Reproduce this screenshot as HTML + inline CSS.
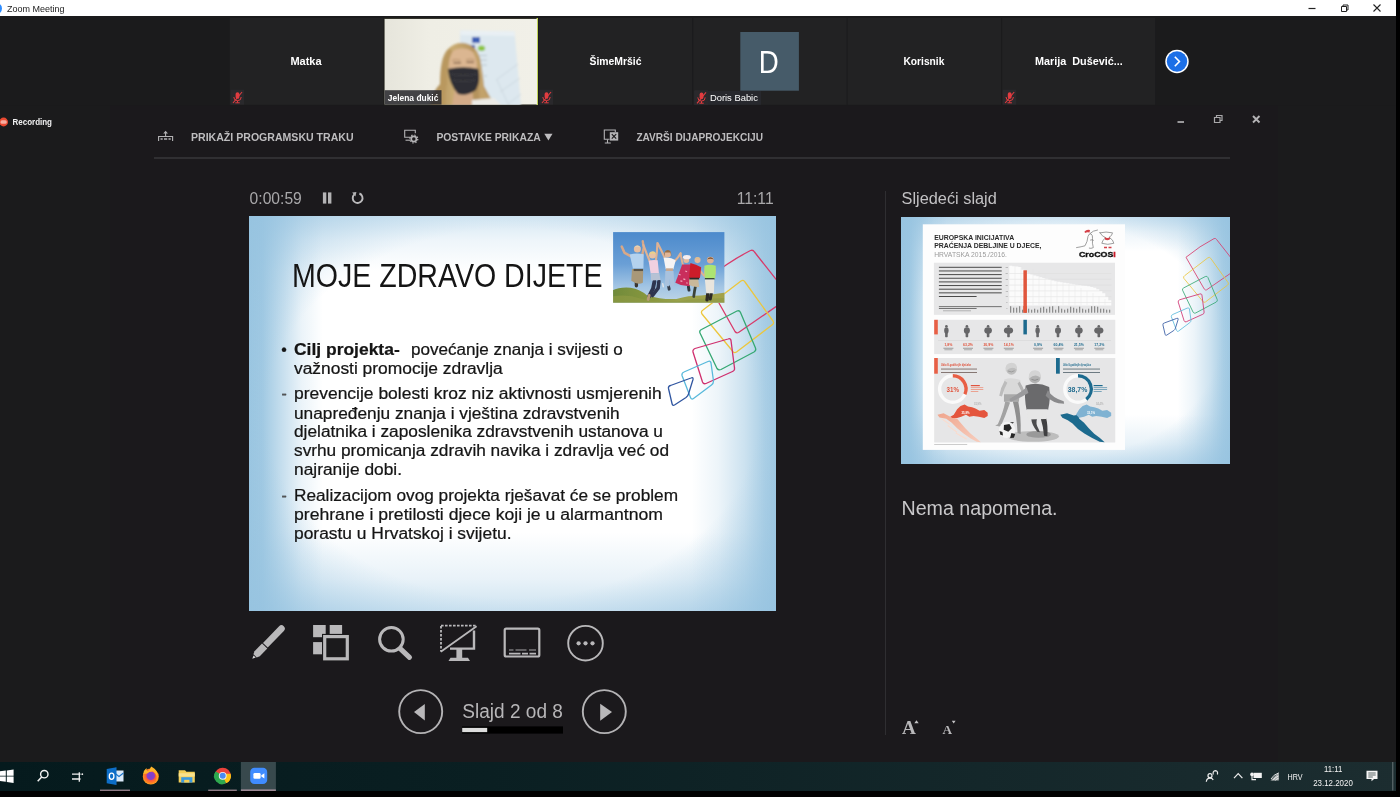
<!DOCTYPE html>
<html lang="hr">
<head>
<meta charset="utf-8">
<title>Zoom Meeting</title>
<style>
*{box-sizing:border-box;margin:0;padding:0}
html,body{width:1400px;height:797px;overflow:hidden;background:#1b1a1c;font-family:"Liberation Sans","DejaVu Sans",sans-serif;color:#fff}
.abs{position:absolute}
#root{position:relative;width:1400px;height:797px;overflow:hidden;background:#1b1a1c;filter:blur(0.35px)}
/* title bar */
#titlebar{left:0;top:0;width:1400px;height:16.500px;background:#fff;color:#222}
#titlebar .ttl{left:7px;top:2px;font-size:10px;line-height:13px;color:#1a1a1a;letter-spacing:-0.1px}
/* gallery */
.tile{top:18px;height:87px;background:#222123;overflow:hidden}
.tile .nm{left:0;right:0;top:35px;text-align:center;font-size:11px;font-weight:bold;line-height:14px;color:#fff}
.mic{left:2px;top:72px;width:13px;height:14px}
/* ppt */
.tb{top:129px;font-size:11px;font-weight:bold;line-height:14px;color:#c9c8ca;letter-spacing:-0.1px;white-space:nowrap}
#slide{left:249px;top:216px;width:527px;height:395px;overflow:hidden;background:radial-gradient(ellipse farthest-corner at 50% 50%,rgba(150,195,224,0) 66%,rgba(150,195,224,.75) 100%),linear-gradient(90deg,rgba(155,198,225,1) 0%,rgba(155,198,225,.95) 2.500%,rgba(155,198,225,.55) 6.500%,rgba(155,198,225,.2) 10%,rgba(155,198,225,0) 14%,rgba(155,198,225,0) 84%,rgba(155,198,225,.18) 89%,rgba(155,198,225,.5) 94%,rgba(155,198,225,.85) 98%,rgba(155,198,225,.95) 100%),linear-gradient(180deg,rgba(185,215,235,.6) 0%,rgba(185,215,235,.25) 6%,rgba(185,215,235,0) 14%,rgba(180,212,233,0) 80%,rgba(180,212,233,.3) 92%,rgba(180,212,233,.65) 100%),#fff}
#slide .t{color:#141414;white-space:nowrap}
#next{left:901px;top:217px;width:329px;height:247px;overflow:hidden;background:radial-gradient(ellipse farthest-corner at 50% 50%,rgba(150,195,224,0) 66%,rgba(150,195,224,.75) 100%),linear-gradient(90deg,rgba(155,198,225,1) 0%,rgba(155,198,225,.95) 2.500%,rgba(155,198,225,.55) 6.500%,rgba(155,198,225,.2) 10%,rgba(155,198,225,0) 14%,rgba(155,198,225,0) 84%,rgba(155,198,225,.18) 89%,rgba(155,198,225,.5) 94%,rgba(155,198,225,.85) 98%,rgba(155,198,225,.95) 100%),linear-gradient(180deg,rgba(185,215,235,.6) 0%,rgba(185,215,235,.25) 6%,rgba(185,215,235,0) 14%,rgba(180,212,233,0) 80%,rgba(180,212,233,.3) 92%,rgba(180,212,233,.65) 100%),#fff}
/* taskbar */
#taskbar{left:0;top:761.500px;width:1400px;height:29.500px;background:linear-gradient(90deg,#051a1d 0%,#0a1f22 35%,#14272a 70%,#1c2d30 100%)}
#below{left:0;top:790.800px;width:1400px;height:7px;background:#010101}
</style>
</head>
<body>
<div id="root">

<!-- TITLE BAR -->
<div id="titlebar" class="abs">
  <div class="abs" style="left:-9px;top:3px;width:11px;height:11px;border-radius:50%;background:#2d8cff"></div>
  <svg class="abs" style="left:0;top:0" width="100" height="17"><text x="7" y="11.700" font-size="9.800" fill="#222" textLength="57.500" lengthAdjust="spacingAndGlyphs" font-family="'Liberation Sans',sans-serif">Zoom Meeting</text></svg>
  <svg class="abs" style="left:1300px;top:0" width="100" height="17" viewBox="0 0 100 17">
    <path d="M8.5 8.5h7" stroke="#222" stroke-width="1.2" fill="none"/>
    <path d="M41.5 6.5h5v5h-5z M43 6.5v-1.5h5v5h-1.5" stroke="#222" stroke-width="1" fill="none"/>
    <path d="M73.5 4.5l7 7M80.500 4.5l-7 7" stroke="#222" stroke-width="1.1" fill="none"/>
  </svg>
</div>

<div class="abs" style="left:0;top:16px;width:110px;height:746px;background:#1b1b1c"></div>
<div class="abs" style="left:1278px;top:16px;width:122px;height:746px;background:#1b1b1c"></div>
<div class="abs" style="left:110px;top:105px;width:1168px;height:657px;background:#1b191c"></div>
<!-- GALLERY -->
<svg class="abs" id="gallery" style="left:0;top:0" width="1400" height="797" viewBox="0 0 1400 797" font-family="'Liberation Sans','DejaVu Sans',sans-serif">
  <defs>
    <filter id="vb" x="-5%" y="-5%" width="110%" height="110%"><feGaussianBlur stdDeviation="0.900"/></filter>
    <clipPath id="vc"><rect x="384.200" y="18.700" width="152.900" height="86.100"/></clipPath>
    <linearGradient id="wall" x1="0" y1="0" x2="1" y2="0"><stop offset="0" stop-color="#e6e5db"/><stop offset=".3" stop-color="#efeee5"/><stop offset="1" stop-color="#f1f0e8"/></linearGradient>
    <linearGradient id="hair" x1="0" y1="0" x2="1" y2="0"><stop offset="0" stop-color="#a88a58"/><stop offset=".35" stop-color="#c9ab72"/><stop offset=".7" stop-color="#b4925c"/><stop offset="1" stop-color="#c7a772"/></linearGradient>
  </defs>
  <rect x="0" y="16" width="1400" height="89.300" fill="#1b1b1c"/>
  <g fill="#222223">
    <rect x="229.700" y="18" width="153.300" height="86.800"/>
    <rect x="538.700" y="18" width="153.500" height="86.800"/>
    <rect x="693.300" y="18" width="153.300" height="86.800"/>
    <rect x="847.600" y="18" width="153.500" height="86.800"/>
    <rect x="1002.200" y="18" width="153" height="86.800"/>
  </g>
  <!-- video tile -->
  <rect x="383.700" y="17.800" width="154.200" height="87.400" fill="#2a2a22"/><rect x="536.500" y="18" width="1.500" height="87" fill="#cfe65a" opacity=".9"/>
  <g clip-path="url(#vc)">
    <rect x="384.500" y="18.800" width="152.600" height="85.800" fill="url(#wall)"/>
    <g filter="url(#vb)">
      <path d="M460.200 30.500 L514.500 31.500 L521 106 L459 106Z" fill="#dde8ef"/>
      <path d="M460.200 30.500 L514.500 31.500 L515 36 L460.500 35Z" fill="#e9f0f4"/>
      <path d="M472 37 h8 v6 h-8z" fill="#3c5fb5"/><path d="M471 45 h4 v4 h-4z" fill="#3c5fb5"/>
      <ellipse cx="481.500" cy="48.200" rx="3.600" ry="2.800" fill="#8cc540"/>
      <path d="M479 55.500h8M480 60h7M481 65h6M484 76h3" stroke="#b8c4cc" stroke-width="1" fill="none"/>
      <path d="M496 80l22-16M500 92l20-14M508 104l13-10M497 80l12 26" stroke="#c9d3da" stroke-width=".8" fill="none"/>
      <!-- hair back -->
      <path d="M430 106 Q432 92 440 84 Q440 58 447 50 Q455 41.500 465 43 Q476 45 480 58 Q483 74 484 86 Q489 96 496 106Z" fill="url(#hair)"/>
      <!-- face -->
      <path d="M449.500 58 Q451 48.500 462 48.300 Q474 49 476.500 58 L477.500 71 L448.500 71Z" fill="#dbb691"/>
      <path d="M453.500 62.800h7.500M466.500 62.300h7.500" stroke="#86664c" stroke-width="1.400" fill="none"/>
      <path d="M452 60.300q4-1.600 8.500 0M466 59.800q4-1.600 8.500 0" stroke="#a98560" stroke-width=".8" fill="none"/>
      <!-- neck -->
      <path d="M455 88 L472 88 L474 106 L452 106Z" fill="#d3ab88"/>
      <!-- mask -->
      <path d="M447.800 69 Q463 65.500 479.300 69 Q481 80 476 90 Q467 96.500 458 94 Q449.500 85 447.800 69Z" fill="#2f2f34"/>
      <path d="M451 74q11 3 26 0M452.500 80q10 3 23 0" stroke="#3f3f45" stroke-width="1" fill="none"/>
      <!-- hair front strands -->
      <path d="M449 49 Q441 60 441 84 Q436 92 433 106 L445.500 106 Q444.500 92 447 84 Q445.500 66 452.500 51Z" fill="#b9985f"/>
      <path d="M476 50 Q482 62 482.500 80 Q484 94 491 106 L481 106 Q478.500 96 479.500 84 Q480 66 473 52Z" fill="#c2a26a"/>
      <path d="M472 100 L494 98 L502 106 L472 106Z" fill="#ecebe6"/>
    </g>
    <rect x="384.500" y="90.200" width="57" height="14.600" fill="#2b2b30" opacity=".88"/>
    <text x="387.800" y="100.800" font-size="9.600" font-weight="bold" fill="#fff" textLength="50.600" lengthAdjust="spacingAndGlyphs">Jelena đukić</text>
  </g>
  <!-- avatar tile -->
  <rect x="740.300" y="32" width="58.600" height="58.700" fill="#465b69"/>
  <text x="758.800" y="72.900" font-size="30.500" fill="#fff" textLength="20" lengthAdjust="spacingAndGlyphs">D</text>
  <rect x="694" y="91" width="67" height="13.800" fill="#27282d"/>
  <text x="709.900" y="100.800" font-size="9.600" fill="#fff" textLength="48" lengthAdjust="spacingAndGlyphs">Doris Babic</text>
  <!-- names -->
  <g font-size="10.800" font-weight="bold" fill="#fff">
    <text x="290.400" y="64.700" textLength="31.200" lengthAdjust="spacingAndGlyphs">Matka</text>
    <text x="589.500" y="64.700" textLength="52" lengthAdjust="spacingAndGlyphs">ŠimeMršić</text>
    <text x="903.400" y="64.700" textLength="41" lengthAdjust="spacingAndGlyphs">Korisnik</text>
    <text x="1035" y="64.700" textLength="87.800" lengthAdjust="spacingAndGlyphs" xml:space="preserve">Marija  Dušević...</text>
  </g>
  <g transform="translate(232 91.2)"><rect x="-1.500" y="-1.500" width="13.500" height="15" fill="#2a292c"/><rect x="3.600" y="1" width="3.800" height="6.600" rx="1.900" fill="#e23c40"/><path d="M1.800 5.800a3.700 3.700 0 0 0 7.400 0M5.500 9.500v2M3.300 11.600h4.400" fill="none" stroke="#e23c40" stroke-width="1"/><path d="M1 11.800L10 .8" stroke="#e23c40" stroke-width="1.100"/></g><g transform="translate(541 91.2)"><rect x="-1.500" y="-1.500" width="13.500" height="15" fill="#2a292c"/><rect x="3.600" y="1" width="3.800" height="6.600" rx="1.900" fill="#e23c40"/><path d="M1.800 5.800a3.700 3.700 0 0 0 7.400 0M5.500 9.500v2M3.300 11.600h4.400" fill="none" stroke="#e23c40" stroke-width="1"/><path d="M1 11.800L10 .8" stroke="#e23c40" stroke-width="1.100"/></g><g transform="translate(696 91.6)"><rect x="-1.500" y="-1.500" width="13.500" height="15" fill="#2a292c"/><rect x="3.600" y="1" width="3.800" height="6.600" rx="1.900" fill="#e23c40"/><path d="M1.800 5.800a3.700 3.700 0 0 0 7.400 0M5.500 9.500v2M3.300 11.600h4.400" fill="none" stroke="#e23c40" stroke-width="1"/><path d="M1 11.800L10 .8" stroke="#e23c40" stroke-width="1.100"/></g><g transform="translate(1004.2 91.2)"><rect x="-1.500" y="-1.500" width="13.500" height="15" fill="#2a292c"/><rect x="3.600" y="1" width="3.800" height="6.600" rx="1.900" fill="#e23c40"/><path d="M1.800 5.800a3.700 3.700 0 0 0 7.400 0M5.500 9.500v2M3.300 11.600h4.400" fill="none" stroke="#e23c40" stroke-width="1"/><path d="M1 11.800L10 .8" stroke="#e23c40" stroke-width="1.100"/></g>
  <!-- next arrow -->
  <circle cx="1177" cy="61.500" r="11.700" fill="#fff"/>
  <circle cx="1177" cy="61.500" r="10.200" fill="#1c6fe6"/>
  <path d="M1174.800 56.800l4.600 4.700l-4.600 4.700" fill="none" stroke="#fff" stroke-width="1.600"/>
  <!-- recording -->
  <circle cx="3.600" cy="122" r="4.400" fill="#ea4a32"/>
  <rect x="0.500" y="120.300" width="6.200" height="3.400" rx="1.500" fill="#f9c0b4" opacity=".85"/>
  <text x="12.500" y="125.200" font-size="9.600" font-weight="bold" fill="#f2f2f2" textLength="39.500" lengthAdjust="spacingAndGlyphs">Recording</text>
  <!-- ppt window controls -->
  <path d="M1177.500 122h6.500" stroke="#a9a8aa" stroke-width="1.800"/>
  <path d="M1214.500 117.500h5.500v5h-5.500z M1216.500 117.500v-2h5.500v5h-2" fill="none" stroke="#a9a8aa" stroke-width="1.200"/>
  <path d="M1253 116l6.500 6.500M1259.500 116l-6.500 6.500" stroke="#b4b3b5" stroke-width="1.900"/>
</svg>

<!-- PRESENTER VIEW -->
<div id="ppt">
  <div class="abs" style="left:154px;top:157px;width:1076px;height:2px;background:#302f32"></div>
  <div class="abs" style="left:885px;top:191px;width:1.200px;height:544px;background:#2f2e31"></div>

  <svg class="abs" id="ui" style="left:0;top:0" width="1400" height="797" viewBox="0 0 1400 797" font-family="'Liberation Sans','DejaVu Sans',sans-serif">
    <!-- top toolbar -->
    <g font-size="10.600" font-weight="bold" fill="#bebdbf">
      <text x="191" y="140.700" textLength="162.600" lengthAdjust="spacingAndGlyphs">PRIKAŽI PROGRAMSKU TRAKU</text>
      <text x="436.400" y="140.700" textLength="104.300" lengthAdjust="spacingAndGlyphs">POSTAVKE PRIKAZA</text>
      <text x="636.400" y="140.700" textLength="126.600" lengthAdjust="spacingAndGlyphs">ZAVRŠI DIJAPROJEKCIJU</text>
    </g>
    <path d="M544.300 133.800h8.200l-4.100 6.800z" fill="#bebdbf"/>
    <!-- icon: show taskbar -->
    <g fill="none" stroke="#b4b3b5" stroke-width="1.100">
      <path d="M158.600 141v-4.500h14v4.500"/>
      <path d="M165.600 136.500v-4.500"/>
    </g>
    <path d="M163.200 133.600l2.400-2.800l2.400 2.800z M160.500 138.200h2.200v1.600h-2.200z M164 138.200h3.200v1.600h-3.200z M168.500 138.200h2.200v1.600h-2.200z" fill="#b4b3b5"/>
    <!-- icon: display settings -->
    <g fill="none" stroke="#b4b3b5" stroke-width="1.100">
      <path d="M411 137.200h-6.300v-7h10.600v3"/>
      <path d="M405.500 140.200h4.500"/>
    </g>
    <circle cx="413.800" cy="139" r="2.600" fill="none" stroke="#b4b3b5" stroke-width="1.700"/>
    <circle cx="413.800" cy="139" r="4" fill="none" stroke="#b4b3b5" stroke-width="1.200" stroke-dasharray="1.400 1.740"/>
    <!-- icon: end show -->
    <g fill="none" stroke="#b4b3b5" stroke-width="1.100">
      <path d="M609.500 139.200h-5.200v-9.200h11v2"/>
      <path d="M607.500 139.500v3.200M604.800 143h6"/>
    </g>
    <rect x="609.800" y="132.200" width="8.400" height="8.400" fill="#b4b3b5"/>
    <path d="M611.800 134.200l4.400 4.400M616.200 134.200l-4.400 4.400" stroke="#1b1a1c" stroke-width="1.200"/>
    <!-- timer row -->
    <g font-size="15.600" fill="#a9a8aa">
      <text x="249.600" y="203.700" textLength="52.200" lengthAdjust="spacingAndGlyphs">0:00:59</text>
      <text x="736.700" y="203.700" textLength="37" lengthAdjust="spacingAndGlyphs">11:11</text>
      <text x="901.600" y="203.800" textLength="95.200" lengthAdjust="spacingAndGlyphs" fill="#c2c1c3">Sljedeći slajd</text>
    </g>
    <rect x="322.900" y="192.400" width="3.400" height="11.200" fill="#b4b3b5"/>
    <rect x="328" y="192.400" width="3.400" height="11.200" fill="#b4b3b5"/>
    <path d="M354.400 194.400A4.900 4.900 0 1 0 359.400 193.500" fill="none" stroke="#bcbbbd" stroke-width="1.900"/>
    <path d="M352.200 192.600l4.200-.6l-1 4.400z" fill="#b4b3b5"/>
    <!-- notes -->
    <text x="901.500" y="514.600" font-size="20" fill="#c9c8ca" textLength="156" lengthAdjust="spacingAndGlyphs">Nema napomena.</text>
    <g font-family="'Liberation Serif','DejaVu Serif',serif" font-weight="bold" fill="#b9b8ba">
      <text x="902" y="733.900" font-size="19.200">A</text>
      <text x="942.600" y="733.900" font-size="13.200">A</text>
    </g>
    <path d="M914.300 723.300l2.200-3.100l2.200 3.100z M951.800 720.700l3.800 0l-1.900 2.700z" fill="#c4c3c5"/>
    <!-- tools -->
    <g id="tools">
      <!-- pen -->
      <g transform="translate(252.300 658.800) rotate(-46)" fill="#b9b8ba">
        <path d="M0 0 L3.300 -1.500 V1.500 Z" fill="#d8d7d9"/>
        <path d="M4 -2.300 L7 -3.650 H17.800 V3.650 H7 L4 2.300 Z"/>
        <path d="M18.800 -3.300 H42 A3.300 3.300 0 0 1 42 3.300 H18.800 Z"/>
      </g>
      <!-- grid -->
      <rect x="313.100" y="625" width="12.600" height="12.200" fill="#b9b8ba"/>
      <rect x="329.700" y="625" width="12.400" height="12.200" fill="#b9b8ba"/>
      <rect x="313.100" y="642.100" width="12" height="12.200" fill="#b9b8ba"/>
      <rect x="322" y="633.900" width="28" height="27.600" fill="#1b1a1c"/>
      <rect x="324.700" y="636.600" width="22.600" height="22.200" fill="none" stroke="#b9b8ba" stroke-width="3.200"/>
      <!-- magnifier -->
      <circle cx="391.400" cy="639.300" r="11.800" fill="none" stroke="#b9b8ba" stroke-width="3"/>
      <path d="M400.200 648.600L409.500 657.400" stroke="#b9b8ba" stroke-width="5" stroke-linecap="round"/>
      <!-- black screen monitor -->
      <path d="M441 625.700H476" stroke="#b9b8ba" stroke-width="1.800" stroke-dasharray="2.600 1.400" fill="none"/>
      <path d="M441 626V651.500" stroke="#b9b8ba" stroke-width="1.800" stroke-dasharray="2.600 1.400" fill="none"/>
      <path d="M440.800 651.800L476.600 626.200" stroke="#b9b8ba" stroke-width="1.800" fill="none"/>
      <path d="M474 630.500V648.600H450" stroke="#b9b8ba" stroke-width="2.400" fill="none"/>
      <rect x="456.400" y="649" width="5.800" height="9.200" fill="#b9b8ba"/>
      <path d="M450.500 657.800h17.500l2 3.200h-21.500z" fill="#b9b8ba"/>
      <!-- subtitles -->
      <rect x="504.700" y="628.700" width="34.600" height="27.800" rx="1.500" fill="none" stroke="#b9b8ba" stroke-width="2.200"/>
      <path d="M509 650h4.500M515.500 650h11M529 650h7" stroke="#b9b8ba" stroke-width=".9"/>
      <path d="M509 653.700h11.500M522 653.700h6M529.500 653.700h6.500" stroke="#b9b8ba" stroke-width="1.700"/>
      <!-- more -->
      <circle cx="585.500" cy="643.200" r="17.300" fill="none" stroke="#b9b8ba" stroke-width="1.900"/>
      <circle cx="578.600" cy="643.300" r="2.100" fill="#b9b8ba"/><circle cx="585.500" cy="643.300" r="2.100" fill="#b9b8ba"/><circle cx="592.500" cy="643.300" r="2.100" fill="#b9b8ba"/>
    </g>
    <!-- nav -->
    <circle cx="420.700" cy="711.600" r="21.500" fill="none" stroke="#b4b3b5" stroke-width="1.900"/>
    <path d="M414 712.100L424.800 704.100V720.600z" fill="#b9b8ba"/>
    <circle cx="604.300" cy="711.600" r="21.500" fill="none" stroke="#b4b3b5" stroke-width="1.900"/>
    <path d="M612 712.100L600.200 703.800V720.700z" fill="#b9b8ba"/>
    <text x="462.300" y="717.500" font-size="20" fill="#b7b6b8" textLength="100.600" lengthAdjust="spacingAndGlyphs">Slajd 2 od 8</text>
    <rect x="462" y="726.400" width="101" height="7.200" fill="#000"/>
    <rect x="462.200" y="727.900" width="25" height="4.200" fill="#dcdcdc"/>
  </svg>

  <div class="abs" id="slide">
    <svg class="abs" style="left:0;top:0" width="527" height="395" viewBox="249 216 527 395" font-family="'Liberation Sans','DejaVu Sans',sans-serif" fill="#151515">
      <g id="deco" fill="none" stroke-width="1.3" stroke-linejoin="round" stroke-linecap="round">
        <path d="M706 280 Q728 262 750.500 250.500 Q753 249.500 754.500 252 L790 297 L738.500 332.500 Q736.500 333.500 735 331.500 Z" stroke="#d83a6a"/>
        <path d="M741 281 Q743.500 279.500 745 282 L773 321 Q774.500 323.500 772 325 L736.500 352 Q734 353.500 732.500 351 L702 314 Q700.500 311.500 703 310 Z" stroke="#ecc63c"/>
        <path d="M737 311 Q739.500 310 740.500 312.500 L755.500 348 Q756.500 350.500 754 352 L721 369.500 Q718.500 370.500 717 368.500 L700 333 Q699 330.500 701.500 329.500 Z" stroke="#35a873"/>
        <path d="M728 339 Q730.500 338 731 340.500 L734.500 368 Q735 370.500 732.500 371.500 L706 383.500 Q703.500 384.500 702.500 382 L693 352 Q692.500 349.500 695 348.500 Z" stroke="#cf2f6e"/>
        <path d="M708 361.500 Q710.500 360.500 711 363 L713.500 381 Q713.500 383.500 711.500 385 L693.500 398.500 Q691.500 400 690.500 397.500 L682 375.500 Q681.500 373 684 372 Z" stroke="#58b9db"/>
        <path d="M691 378 Q693.500 377 693 379.500 L688.500 394 Q688 396 686 397.500 L674.500 405 Q672.500 406 672 403.500 L668.500 388.500 Q668 386 670.500 385.500 Z" stroke="#2f55a0"/>
      </g>
      <text x="292" y="286.700" font-size="32.500" textLength="310.500" lengthAdjust="spacingAndGlyphs">MOJE ZDRAVO DIJETE</text>
      <g font-size="15.800" stroke="#151515" stroke-width=".22">
        <text x="281.300" y="354.600">•</text>
        <text x="294" y="354.600" font-weight="bold" textLength="105.700" lengthAdjust="spacingAndGlyphs">Cilj projekta-</text>
        <text x="411" y="354.600" textLength="211.700" lengthAdjust="spacingAndGlyphs">povećanje znanja i svijesti o</text>
        <text x="294" y="373.500" textLength="208.700" lengthAdjust="spacingAndGlyphs">važnosti promocije zdravlja</text>
        <text x="281.500" y="399" fill="#555">-</text>
        <text x="294" y="399" textLength="367.700" lengthAdjust="spacingAndGlyphs">prevencije bolesti kroz niz aktivnosti usmjerenih</text>
        <text x="294" y="418.500" textLength="325.700" lengthAdjust="spacingAndGlyphs">unapređenju znanja i vještina zdravstvenih</text>
        <text x="294" y="437.300" textLength="369" lengthAdjust="spacingAndGlyphs">djelatnika i zaposlenika zdravstvenih ustanova u</text>
        <text x="294" y="456.200" textLength="375" lengthAdjust="spacingAndGlyphs">svrhu promicanja zdravih navika i zdravlja već od</text>
        <text x="294" y="475.200" textLength="108" lengthAdjust="spacingAndGlyphs">najranije dobi.</text>
        <text x="281.500" y="501" fill="#555">-</text>
        <text x="294" y="501" textLength="384" lengthAdjust="spacingAndGlyphs">Realizacijom ovog projekta rješavat će se problem</text>
        <text x="294" y="520" textLength="369" lengthAdjust="spacingAndGlyphs">prehrane i pretilosti djece koji je u alarmantnom</text>
        <text x="294" y="538.700" textLength="217.500" lengthAdjust="spacingAndGlyphs">porastu u Hrvatskoj i svijetu.</text>
      </g>
      <g id="photo">
        <defs>
          <linearGradient id="sky" x1="0" y1="0" x2="0" y2="1"><stop offset="0" stop-color="#4c8acc"/><stop offset="0.450" stop-color="#6a9fd6"/><stop offset="0.780" stop-color="#a4c6e4"/><stop offset="1" stop-color="#c0d6e6"/></linearGradient>
          <linearGradient id="grass" x1="0" y1="0" x2="1" y2="0"><stop offset="0" stop-color="#6f8a3a"/><stop offset="0.300" stop-color="#86963e"/><stop offset=".6" stop-color="#9aa24c"/><stop offset="1" stop-color="#a3a24a"/></linearGradient>
          <filter id="pb" x="-5%" y="-5%" width="110%" height="110%"><feGaussianBlur stdDeviation="5.500"/></filter>
          <clipPath id="pc"><rect x="52" y="42" width="1138" height="723"/></clipPath>
        </defs>
        <rect x="613.100" y="232.100" width="111.300" height="70.800" fill="url(#sky)"/>
        <g transform="translate(608 228) scale(0.097850)">
         <g clip-path="url(#pc)"><g filter="url(#pb)">
          <path d="M40 640 Q120 600 230 610 Q330 625 400 690 Q560 735 700 725 Q820 690 950 690 Q1080 680 1200 660 V780 H40Z" fill="url(#grass)"/>
          <path d="M40 700 Q200 670 330 720 Q500 760 700 750 Q900 720 1200 715 V780 H40Z" fill="#8f9a44" opacity=".7"/>
          <g stroke-linecap="round" stroke-linejoin="round" fill="none">
            <!-- kid1 -->
            <path d="M235 290 L170 255 L140 190" stroke="#d8a888" stroke-width="26"/>
            <path d="M350 275 L365 200 L355 135" stroke="#d8a888" stroke-width="24"/>
            <path d="M290 540 L290 590" stroke="#3a3630" stroke-width="34"/>
            <!-- kid2 -->
            <path d="M425 335 L390 250 L362 175" stroke="#deb294" stroke-width="22"/>
            <path d="M490 325 L500 240 L505 155" stroke="#deb294" stroke-width="22"/>
            <path d="M475 545 L460 620 L420 700" stroke="#2e3450" stroke-width="40"/>
            <path d="M520 545 L512 615 L455 690" stroke="#2e3450" stroke-width="36"/>
            <path d="M420 690 L410 730" stroke="#b89a78" stroke-width="30"/>
            <!-- kid3 -->
            <path d="M580 305 L545 230 L510 160" stroke="#deb294" stroke-width="22"/>
            <path d="M680 340 L715 300 L742 258" stroke="#deb294" stroke-width="22"/>
            <path d="M620 600 L625 625" stroke="#39414e" stroke-width="30"/>
            <path d="M560 570 L565 600" stroke="#e8e8ea" stroke-width="14"/>
            <!-- kid4 -->
            <path d="M765 375 L750 310 L742 262" stroke="#deb294" stroke-width="20"/>
            <path d="M822 600 L828 635" stroke="#33393c" stroke-width="30"/>
            <!-- kid5 -->
            <path d="M850 385 L905 400" stroke="#e0b090" stroke-width="20"/>
            <path d="M945 440 L975 480 L1000 500" stroke="#deb294" stroke-width="20"/>
            <path d="M895 590 L885 640 L876 700" stroke="#3b4238" stroke-width="28"/>
            <!-- kid6 -->
            <path d="M1090 420 L1090 470 L1060 470" stroke="#deb294" stroke-width="22"/>
            <path d="M995 420 L990 490" stroke="#deb294" stroke-width="20"/>
            <path d="M1020 672 L1012 735" stroke="#2e2c28" stroke-width="34"/>
            <path d="M1055 672 L1045 725" stroke="#2e2c28" stroke-width="32"/>
          </g>
          <!-- kid1 body -->
          <path d="M222 270 Q290 250 365 268 L362 415 L255 415 Z" fill="#b4d2ee"/>
          <path d="M245 420 L360 420 L356 560 Q300 585 238 540 Z" fill="#a99878"/>
          <path d="M262 418 h96 v22 h-96z" fill="#5a5244"/>
          <circle cx="300" cy="215" r="36" fill="#e6bfa2"/>
          <path d="M268 200 Q300 160 334 200 Q300 185 268 200Z" fill="#e4d4b4"/>
          <!-- kid2 body -->
          <path d="M415 335 Q460 320 508 330 L520 460 L436 466 Z" fill="#f0d0e0"/>
          <path d="M436 466 L524 460 L536 532 L440 536 Z" fill="#b6c2d4"/>
          <circle cx="455" cy="278" r="34" fill="#e8c2a4"/>
          <path d="M420 290 Q415 240 455 238 Q495 240 492 285 L484 262 L430 262Z" fill="#ead08c"/>
          <!-- kid3 body -->
          <path d="M568 305 Q630 290 692 330 L668 422 L590 422 Z" fill="#f6f4f4"/>
          <path d="M592 412 h72 v30 h-72z" fill="#c8a890"/>
          <path d="M585 440 L670 440 L678 590 L640 598 L632 520 L622 598 L582 585 Z" fill="#a9c2de"/>
          <circle cx="610" cy="268" r="34" fill="#e2b698"/>
          <path d="M575 290 Q568 225 612 224 Q652 226 646 292 L638 250 L584 250Z" fill="#9a6e44"/>
          <!-- kid4 body -->
          <path d="M758 372 L850 372 L838 592 Q760 600 688 560 Z" fill="#c92f5c"/>
          <path d="M720 470 l22 10 M770 520 l20 8 M790 440 l18 8 M740 540 l20 6 M800 560 l14 5" stroke="#f0a8bc" stroke-width="12" fill="none"/>
          <circle cx="800" cy="328" r="30" fill="#e4b89c"/>
          <ellipse cx="806" cy="298" rx="40" ry="22" fill="#f6eef0"/>
          <!-- kid5 body -->
          <path d="M842 358 Q900 370 952 402 L940 512 L828 512 Z" fill="#cc1e2a"/>
          <path d="M830 515 L922 520 L932 602 Q880 610 828 580 Z" fill="#c9b89a"/>
          <path d="M832 508 h100 v18 h-100z" fill="#2c2a2a"/>
          <circle cx="915" cy="328" r="31" fill="#e4ba9c"/>
          <path d="M886 318 Q915 282 946 318 Q915 305 886 318Z" fill="#d8c08a"/>
          <!-- kid6 body -->
          <path d="M985 385 Q1040 368 1102 385 L1096 517 L990 517 Z" fill="#ace472"/>
          <path d="M990 512 h98 v16 h-98z" fill="#2e3a2a"/>
          <path d="M990 527 L1087 527 L1082 668 L1004 668 Z" fill="#e9e5dd"/>
          <circle cx="1046" cy="328" r="35" fill="#e0b294"/>
          <path d="M1012 322 Q1046 275 1082 322 Q1046 306 1012 322Z" fill="#7a5638"/>
         </g></g>
        </g>
      </g>
    </svg>
  </div>
  <div class="abs" id="next">
    <svg class="abs" style="left:0;top:0" width="329" height="247" viewBox="901 217 329 247" font-family="'Liberation Sans','DejaVu Sans',sans-serif">
      <defs>
        <filter id="tb1" x="-5%" y="-5%" width="110%" height="110%"><feGaussianBlur stdDeviation="0.400"/></filter>
        <filter id="tb2" x="-10%" y="-10%" width="120%" height="120%"><feGaussianBlur stdDeviation="0.700"/></filter>
        <filter id="tb3" x="-10%" y="-10%" width="120%" height="120%"><feGaussianBlur stdDeviation="4.500"/></filter>
        <linearGradient id="coastR" x1="0" y1="0" x2="1" y2="1"><stop offset="0" stop-color="#f0a68e"/><stop offset="1" stop-color="#f7cdbd"/></linearGradient>
      </defs>
      <g fill="none" stroke-width="1.400" stroke-linejoin="round" stroke-linecap="round" transform="translate(901 217) scale(0.6243 0.6253) translate(-249 -216)" opacity=".95">
        <path d="M706 280 Q728 262 750.500 250.500 Q753 249.500 754.500 252 L790 297 L738.500 332.500 Q736.500 333.500 735 331.500 Z" stroke="#d83a6a"/>
        <path d="M741 281 Q743.500 279.500 745 282 L773 321 Q774.500 323.500 772 325 L736.500 352 Q734 353.500 732.500 351 L702 314 Q700.500 311.500 703 310 Z" stroke="#ecc63c"/>
        <path d="M737 311 Q739.500 310 740.500 312.500 L755.500 348 Q756.500 350.500 754 352 L721 369.500 Q718.500 370.500 717 368.500 L700 333 Q699 330.500 701.500 329.500 Z" stroke="#35a873"/>
        <path d="M728 339 Q730.500 338 731 340.500 L734.500 368 Q735 370.500 732.500 371.500 L706 383.500 Q703.500 384.500 702.500 382 L693 352 Q692.500 349.500 695 348.500 Z" stroke="#cf2f6e"/>
        <path d="M708 361.500 Q710.500 360.500 711 363 L713.500 381 Q713.500 383.500 711.500 385 L693.500 398.500 Q691.500 400 690.500 397.500 L682 375.500 Q681.500 373 684 372 Z" stroke="#58b9db"/>
        <path d="M691 378 Q693.500 377 693 379.500 L688.500 394 Q688 396 686 397.500 L674.500 405 Q672.500 406 672 403.500 L668.500 388.500 Q668 386 670.500 385.500 Z" stroke="#2f55a0"/>
      </g>
      <rect x="922.800" y="224.300" width="202.200" height="225.600" fill="#fdfdfd"/>
      <g filter="url(#tb1)">
        <!-- header -->
        <g font-weight="bold" font-size="6.400" fill="#2a2a2a">
          <text x="934.200" y="239.600" textLength="80" lengthAdjust="spacingAndGlyphs">EUROPSKA INICIJATIVA</text>
          <text x="934.200" y="248.300" textLength="107.300" lengthAdjust="spacingAndGlyphs">PRAĆENJA DEBLJINE U DJECE,</text>
          <text x="934.200" y="256.500" textLength="72.700" lengthAdjust="spacingAndGlyphs" fill="#9a9a9a" font-weight="normal">HRVATSKA 2015./2016.</text>
          <text x="1079" y="256.900" font-size="7.600" textLength="36.800" lengthAdjust="spacingAndGlyphs" fill="#111" stroke="#111" stroke-width=".35">CroCOS<tspan fill="#c8202c" stroke="#c8202c">I</tspan></text>
        </g>
        <!-- logo cartoon -->
        <g fill="none" stroke="#6a6a6a" stroke-width=".75" stroke-linecap="round" opacity=".85">
          <path d="M1076.500 247.600 q5 -.8 8.500 -1.800 q2.500 -4 3 -9.500 q1 -3 3 -2.500 q2 1.500 1.500 5 q-.5 4.500 .8 8.800 q-2.500 1.300 -4 .6 M1090 233.500 q3 -3 7.500 -3.500 M1090.500 240 q2 -.8 3 .2"/>
          <path d="M1100 232.800 q6 -1.500 12.500 0 q-.3 3 -3.500 4.500 q4.500 2.500 4.800 6 q-6 2 -12 0 q.5 -3.500 4 -5.500 q-4 -1.500 -5.800 -5z"/>
        </g>
        <path d="M1084.500 231.500 q2.300 -2.500 5.500 -1.500 l-.5 2.600 q-2.500 -.9 -4.500 .4z M1104.500 237.200 q3 1.400 5.800 0 l-.8 2.600 q-2.200 .8 -4.300 0z M1104 246.800 h3 v1.500 h-3z M1108.500 246.800 h3 v1.500 h-3z" fill="#cf2b33" opacity=".9"/>
        <!-- panel 1 -->
        <rect x="933.900" y="262.700" width="181.100" height="52.100" fill="#e7e7e8"/>
        <rect x="938.9" y="266.80" width="62.8" height="1.0" fill="#4a4a4a"/><rect x="938.9" y="270.45" width="62.8" height="1.0" fill="#4a4a4a"/><rect x="938.9" y="274.10" width="62.8" height="1.0" fill="#4a4a4a"/><rect x="938.9" y="277.75" width="62.8" height="1.0" fill="#4a4a4a"/><rect x="938.9" y="281.40" width="62.8" height="1.0" fill="#4a4a4a"/><rect x="938.9" y="285.05" width="62.8" height="1.0" fill="#4a4a4a"/><rect x="938.9" y="288.70" width="62.8" height="1.0" fill="#4a4a4a"/><rect x="938.9" y="292.35" width="62.8" height="1.0" fill="#4a4a4a"/><rect x="938.9" y="296.00" width="37.7" height="1.0" fill="#4a4a4a"/>
        <rect x="938.9" y="306.30" width="62.8" height="0.8" fill="#555"/><rect x="938.9" y="308.20" width="37.7" height="0.8" fill="#555"/>
        <rect x="943" y="310.500" width="28" height=".7" fill="#999"/>
        <path d="M1009.3 305.6 V265.8 h3.00 V266.2 h3.00 V266.6 h3.00 V267.0 h3.00 V269.8 h3.00 V271.9 h3.00 V273.6 h3.00 V274.5 h3.00 V275.4 h3.00 V276.3 h3.00 V277.2 h3.00 V278.0 h3.00 V278.8 h3.00 V279.6 h3.00 V280.5 h3.00 V281.3 h3.00 V281.8 h3.00 V282.3 h3.00 V282.8 h3.00 V283.3 h3.00 V283.8 h3.00 V284.3 h3.00 V284.7 h3.00 V285.1 h3.00 V285.4 h3.00 V285.8 h3.00 V286.2 h3.00 V287.0 h3.00 V287.7 h3.00 V289.2 h3.00 V291.0 h3.00 V293.3 h3.00 V296.7 h3.00 V300.2 h3.00 V305.6 Z" fill="#fbfbfb"/>
        <g stroke="#dcdcdc" stroke-width=".45" fill="none"><path d="M1009.300 273.500H1111.400M1009.300 279.300H1111.400M1009.300 285.100H1111.400M1009.300 290.900H1111.400M1009.300 296.700H1111.400M1009.300 302.500H1111.400"/></g>
        <g stroke="#e4e4e4" stroke-width=".4" fill="none"><path d="M1015 266v39M1021 266v39M1033 269v36M1039 271v34M1045 274v31M1051 277v28M1057 279v26M1063 281v24M1069 284v21M1075 286v19M1081 288v17M1087 291v14M1093 293v12M1099 296v9M1105 299v6"/></g>
        <rect x="1023.400" y="270.300" width="3.500" height="42.400" fill="#e0563c"/>
        <g fill="#777"><rect x="1010.2" y="306.2" width="1" height="6.5" /><rect x="1013.2" y="307.7" width="1" height="5" /><rect x="1016.2" y="307.7" width="1" height="5" /><rect x="1019.2" y="306.2" width="1" height="6.5" /><rect x="1022.2" y="309.7" width="1" height="3" /><rect x="1025.2" y="306.7" width="1" height="6" /><rect x="1028.2" y="308.7" width="1" height="4" /><rect x="1031.2" y="309.7" width="1" height="3" /><rect x="1034.2" y="308.7" width="1" height="4" /><rect x="1037.2" y="309.7" width="1" height="3" /><rect x="1040.2" y="307.7" width="1" height="5" /><rect x="1043.2" y="306.7" width="1" height="6" /><rect x="1046.2" y="308.7" width="1" height="4" /><rect x="1049.2" y="306.7" width="1" height="6" /><rect x="1052.2" y="306.2" width="1" height="6.5" /><rect x="1055.2" y="309.7" width="1" height="3" /><rect x="1058.2" y="306.2" width="1" height="6.5" /><rect x="1061.2" y="308.7" width="1" height="4" /><rect x="1064.2" y="309.7" width="1" height="3" /><rect x="1067.2" y="308.7" width="1" height="4" /><rect x="1070.2" y="306.7" width="1" height="6" /><rect x="1073.2" y="307.7" width="1" height="5" /><rect x="1076.2" y="308.7" width="1" height="4" /><rect x="1079.2" y="306.7" width="1" height="6" /><rect x="1082.2" y="308.7" width="1" height="4" /><rect x="1085.2" y="309.7" width="1" height="3" /><rect x="1088.2" y="308.7" width="1" height="4" /><rect x="1091.2" y="306.2" width="1" height="6.5" /><rect x="1094.2" y="306.2" width="1" height="6.5" /><rect x="1097.2" y="306.7" width="1" height="6" /><rect x="1100.2" y="308.7" width="1" height="4" /><rect x="1103.2" y="308.7" width="1" height="4" /><rect x="1106.2" y="309.7" width="1" height="3" /><rect x="1109.2" y="309.7" width="1" height="3" /></g>
        <rect x="1023.400" y="306" width="3.500" height="6.700" fill="#e0563c"/>
        <g fill="#888" font-size="2.200"><text x="1005.500" y="268">35</text><text x="1005.500" y="274.200">30</text><text x="1005.500" y="280">25</text><text x="1005.500" y="285.800">20</text><text x="1005.500" y="291.600">15</text><text x="1005.500" y="297.400">10</text><text x="1006.200" y="303.200">5</text><text x="1006.200" y="308.500">0</text></g>
        <!-- panel 2 -->
        <rect x="934.200" y="319.800" width="181.100" height="34.300" fill="#e7e7e8"/>
        <rect x="934.200" y="319.800" width="3.600" height="14.600" fill="#e85f45"/>
        <rect x="1023.400" y="319.800" width="3.500" height="14.600" fill="#1f6b8e"/>
        <g fill="#666668"><circle cx="946.4" cy="326.300" r="1.300"/><ellipse cx="946.4" cy="330.600" rx="2.2" ry="3.300"/><rect x="945.1" y="331" width="2.600" height="6.200" rx=".6"/><circle cx="966.9" cy="326.300" r="1.300"/><ellipse cx="966.9" cy="330.600" rx="3.0" ry="3.300"/><rect x="965.6" y="331" width="2.600" height="6.200" rx=".6"/><circle cx="988.1" cy="326.300" r="1.300"/><ellipse cx="988.1" cy="330.600" rx="3.8" ry="3.300"/><rect x="986.8" y="331" width="2.600" height="6.200" rx=".6"/><circle cx="1008.5" cy="326.300" r="1.300"/><ellipse cx="1008.5" cy="330.600" rx="4.6" ry="3.300"/><rect x="1007.2" y="331" width="2.600" height="6.200" rx=".6"/><circle cx="1037.6" cy="326.300" r="1.300"/><ellipse cx="1037.6" cy="330.600" rx="2.2" ry="3.300"/><rect x="1036.3" y="331" width="2.600" height="6.200" rx=".6"/><circle cx="1058" cy="326.300" r="1.300"/><ellipse cx="1058" cy="330.600" rx="3.0" ry="3.300"/><rect x="1056.7" y="331" width="2.600" height="6.200" rx=".6"/><circle cx="1078.9" cy="326.300" r="1.300"/><ellipse cx="1078.9" cy="330.600" rx="3.8" ry="3.300"/><rect x="1077.6" y="331" width="2.600" height="6.200" rx=".6"/><circle cx="1098.8" cy="326.300" r="1.300"/><ellipse cx="1098.8" cy="330.600" rx="4.6" ry="3.300"/><rect x="1097.5" y="331" width="2.600" height="6.200" rx=".6"/></g>
        <rect x="938" y="340.500" width="173" height=".4" fill="#cfcfcf"/>
        <g font-size="3.500" font-weight="bold"><text x="948.4" y="346.200" text-anchor="middle" fill="#e0533c">1,8%</text><text x="968" y="346.200" text-anchor="middle" fill="#e0533c">63,2%</text><text x="988.4" y="346.200" text-anchor="middle" fill="#e0533c">20,9%</text><text x="1008.8" y="346.200" text-anchor="middle" fill="#e0533c">14,1%</text><text x="1038.1" y="346.200" text-anchor="middle" fill="#1f6b8e">0,9%</text><text x="1058.5" y="346.200" text-anchor="middle" fill="#1f6b8e">60,4%</text><text x="1078.9" y="346.200" text-anchor="middle" fill="#1f6b8e">21,5%</text><text x="1099.3" y="346.200" text-anchor="middle" fill="#1f6b8e">17,2%</text></g>
        <rect x="943.4" y="347.800" width="10" height=".8" fill="#8a8a8a"/><rect x="944.4" y="349.400" width="8" height=".8" fill="#9a9a9a"/><rect x="963" y="347.800" width="10" height=".8" fill="#8a8a8a"/><rect x="964" y="349.400" width="8" height=".8" fill="#9a9a9a"/><rect x="983.4" y="347.800" width="10" height=".8" fill="#8a8a8a"/><rect x="984.4" y="349.400" width="8" height=".8" fill="#9a9a9a"/><rect x="1003.8" y="347.800" width="10" height=".8" fill="#8a8a8a"/><rect x="1004.8" y="349.400" width="8" height=".8" fill="#9a9a9a"/><rect x="1033.1" y="347.800" width="10" height=".8" fill="#8a8a8a"/><rect x="1034.1" y="349.400" width="8" height=".8" fill="#9a9a9a"/><rect x="1053.5" y="347.800" width="10" height=".8" fill="#8a8a8a"/><rect x="1054.5" y="349.400" width="8" height=".8" fill="#9a9a9a"/><rect x="1073.9" y="347.800" width="10" height=".8" fill="#8a8a8a"/><rect x="1074.9" y="349.400" width="8" height=".8" fill="#9a9a9a"/><rect x="1094.3" y="347.800" width="10" height=".8" fill="#8a8a8a"/><rect x="1095.3" y="349.400" width="8" height=".8" fill="#9a9a9a"/>
        <!-- panel 3 -->
        <rect x="934.200" y="358" width="181.100" height="84.500" fill="#e6e6e7"/>
        <rect x="934.200" y="358" width="3.600" height="15.700" fill="#e85f45"/>
        <rect x="1056" y="358" width="3.800" height="15.700" fill="#1f6b8e"/>
        <g font-size="3.300" font-weight="bold"><text x="941" y="366.300" fill="#e0533c" textLength="30" lengthAdjust="spacingAndGlyphs">Udio 8-godišnjih dječaka</text><text x="1063" y="366.300" fill="#1f6b8e" textLength="28" lengthAdjust="spacingAndGlyphs">Udio 8-godišnjih djevojčica</text></g>
        <rect x="941" y="368.60" width="36.0" height="0.9" fill="#7a6a66"/><rect x="941" y="372.10" width="36.0" height="0.9" fill="#7a6a66"/>
        <rect x="1063" y="368.60" width="37.0" height="0.9" fill="#5f6e76"/><rect x="1063" y="372.10" width="37.0" height="0.9" fill="#5f6e76"/>
      </g>
      <!-- photo kids (grayscale) -->
      <g transform="translate(930 355) scale(0.135720)">
       <g filter="url(#tb3)">
        <ellipse cx="760" cy="600" rx="190" ry="40" fill="#9a9a9a" opacity=".55"/>
        <ellipse cx="800" cy="585" rx="90" ry="25" fill="#777" opacity=".5"/>
        <!-- girl -->
        <path d="M555 340 Q540 420 500 510 L480 520 L520 528 Q560 440 590 350Z" fill="#a2a2a2"/>
        <path d="M610 340 Q640 450 645 575 L668 582 Q672 450 650 340Z" fill="#8e8e8e"/>
        <path d="M548 180 Q600 160 665 185 Q675 240 660 295 L545 295 Q535 235 548 180Z" fill="#d9d9d9"/>
        <path d="M545 290 L660 290 L655 345 L545 345Z" fill="#a9a9a9"/>
        <path d="M550 190 Q520 240 510 300 L530 305 Q545 250 570 205Z" fill="#bcbcbc"/>
        <path d="M660 195 Q690 240 700 280 L680 290 Q665 245 645 210Z" fill="#b4b4b4"/>
        <circle cx="600" cy="105" r="40" fill="#bdbdbd"/>
        <path d="M558 120 Q548 60 600 58 Q648 60 640 110 Q610 75 558 120Z" fill="#d2d2d2"/>
        <path d="M575 118 q25 14 48 -2" stroke="#9a9a9a" stroke-width="7" fill="none"/>
        <!-- boy -->
        <path d="M745 465 Q750 520 790 565 L810 570 L800 545 Q775 510 790 465Z" fill="#4c4c4e"/>
        <path d="M815 465 Q835 530 840 595 L865 598 Q870 520 855 462Z" fill="#404042"/>
        <path d="M705 225 Q790 195 878 235 Q890 320 870 405 L712 405 Q692 315 705 225Z" fill="#6a6a6c"/>
        <path d="M712 400 L868 400 L858 472 L720 476Z" fill="#e6e6e6"/>
        <path d="M712 240 Q660 280 585 325 L595 345 Q670 315 725 280Z" fill="#9a9a9c"/>
        <path d="M868 260 Q905 320 985 340 L988 360 Q900 355 852 300Z" fill="#8a8a8c"/>
        <circle cx="772" cy="165" r="43" fill="#b2b2b2"/>
        <path d="M728 175 Q722 112 775 112 Q825 115 815 170 Q780 130 728 175Z" fill="#d4d4d4"/>
        <path d="M748 180 q25 14 50 -2" stroke="#8a8a8a" stroke-width="7" fill="none"/>
        <!-- ball -->
        <circle cx="568" cy="552" r="60" fill="#f3f3f3"/>
        <path d="M545 515 l40 -6 l18 30 l-26 26 l-34 -14z M600 575 l28 8 l-10 26 l-28 2z M512 560 l22 8 l4 26 l-20 -6z M588 498 l22 6 l8 -10" fill="#262626"/>
       </g>
      </g>
      <g transform="translate(930 355) scale(0.135720)" filter="url(#tb3)">
        <!-- croatia red -->
        <path d="M55 440 L100 430 L150 455 L200 470 L225 500 L260 540 L300 580 L350 620 L375 642 L345 640 L300 615 L250 580 L200 540 L160 500 L120 470 L70 460Z" fill="url(#coastR)"/>
        <path d="M85 470 l60 40 M130 520 l70 50 M190 575 l80 45" stroke="#f9dccf" stroke-width="9" fill="none"/>
        <path d="M150 455 L175 440 L200 400 L225 375 L255 365 L280 380 L310 385 L335 395 L365 410 L400 405 L425 425 L425 450 L400 465 L360 455 L320 450 L290 455 L265 440 L230 455 L200 465 L165 465Z" fill="#e4553c"/>
        <!-- croatia blue -->
        <path d="M960 440 L1010 430 L1060 445 L1090 440 L1100 470 L1135 500 L1170 540 L1210 580 L1250 610 L1287 642 L1250 640 L1195 612 L1140 580 L1090 545 L1050 505 L1015 480 L975 462Z" fill="#1f6b8e"/>
        <path d="M1075 440 L1100 400 L1125 375 L1155 365 L1180 380 L1210 385 L1240 395 L1270 410 L1305 405 L1335 425 L1335 450 L1305 465 L1265 455 L1225 450 L1195 455 L1170 440 L1135 455 L1100 462Z" fill="#7fb2d2"/>
      </g>
      <g filter="url(#tb1)">
        <!-- donuts -->
        <circle cx="952.800" cy="389" r="13.200" fill="none" stroke="#fafafa" stroke-width="3.400"/>
        <path d="M952.800 375.800 A13.200 13.200 0 0 1 964.900 394.300" fill="none" stroke="#e85f45" stroke-width="3.400"/>
        <text x="952.800" y="391.600" text-anchor="middle" font-size="7.200" font-weight="bold" fill="#e0533c" textLength="12.500" lengthAdjust="spacingAndGlyphs">31%</text>
        <circle cx="1078" cy="389" r="13.200" fill="none" stroke="#fafafa" stroke-width="3.400"/>
        <path d="M1078 375.800 A13.200 13.200 0 0 1 1086.300 399.300" fill="none" stroke="#1f6b8e" stroke-width="3.400"/>
        <text x="1077.500" y="391.600" text-anchor="middle" font-size="7.200" font-weight="bold" fill="#1f6b8e" textLength="19.500" lengthAdjust="spacingAndGlyphs">38,7%</text>
        <rect x="970.8" y="385.00" width="9.0" height="1.2" fill="#e0533c"/><rect x="970.8" y="387.20" width="12.5" height="0.9" fill="#ec9a88"/><rect x="970.8" y="389.10" width="12.5" height="0.9" fill="#ec9a88"/><rect x="970.8" y="391.00" width="7.5" height="0.9" fill="#ec9a88"/>
        <rect x="1093.6" y="385.00" width="9.0" height="1.2" fill="#1f6b8e"/><rect x="1093.6" y="387.20" width="13.5" height="0.9" fill="#6f9fb6"/><rect x="1093.6" y="389.10" width="13.5" height="0.9" fill="#6f9fb6"/><rect x="1093.6" y="391.00" width="8.1" height="0.9" fill="#6f9fb6"/>
        <text x="961.500" y="413.600" font-size="2.800" font-weight="bold" fill="#fff">35,8%</text>
        <text x="974" y="404.500" font-size="2.600" fill="#999">31,9%</text>
        <text x="1087" y="413.600" font-size="2.800" font-weight="bold" fill="#fff">33,1%</text>
        <text x="1096" y="404.500" font-size="2.600" fill="#999">34,4%</text>
        <rect x="934.200" y="444.200" width="33" height=".6" fill="#aaa"/>
      </g>
    </svg>
  </div>
</div>

<!-- TASKBAR -->
<div id="taskbar" class="abs"></div>
<div id="below" class="abs"></div>
<div class="abs" style="left:1396px;top:0;width:4px;height:797px;background:#000"></div>
<svg class="abs" id="tbicons" style="left:0;top:0" width="1400" height="797" viewBox="0 0 1400 797" font-family="'Liberation Sans','DejaVu Sans',sans-serif">
  <defs>
    <filter id="kb" x="-10%" y="-10%" width="120%" height="120%"><feGaussianBlur stdDeviation="0.450"/></filter>
    <radialGradient id="ffx" cx=".5" cy=".45" r=".6"><stop offset="0" stop-color="#7b3fd0"/><stop offset=".38" stop-color="#8a3fc8"/><stop offset=".5" stop-color="#ff5a36"/><stop offset=".8" stop-color="#ff8a1e"/><stop offset="1" stop-color="#ffc32e"/></radialGradient>
  </defs>
  <g filter="url(#kb)">
    <!-- start -->
    <path d="M0 771.300l5.800-.8v5.200H0z M6.800 770.400l6.800-1v6.300H6.800z M0 776.600h5.800v5.200l-5.800-.8z M6.800 776.600h6.800v6.300l-6.800-1z" fill="#fff"/>
    <!-- search -->
    <circle cx="44.300" cy="774.200" r="3.700" fill="none" stroke="#f4f4f4" stroke-width="1.400"/>
    <path d="M41.700 776.900l-4 4.300" stroke="#f4f4f4" stroke-width="1.500"/>
    <!-- task view -->
    <path d="M72 774.200h8.500M72 779h8.500M79.300 772.300v9.400" stroke="#f0f0f0" stroke-width="1.300" fill="none"/>
    <circle cx="82.300" cy="774.200" r=".9" fill="#f0f0f0"/>
    <!-- outlook -->
    <rect x="113.500" y="770.500" width="10" height="11" fill="#dbeafa"/>
    <path d="M114.500 773l4.500 3.500l4.500-3.500" stroke="#1a73c8" stroke-width="1.100" fill="none"/>
    <path d="M106.700 769l9.800-1.800v17.800l-9.800-1.800z" fill="#0f6ec8"/>
    <ellipse cx="111.600" cy="776.200" rx="2.300" ry="3.100" fill="none" stroke="#fff" stroke-width="1.300"/>
    <!-- firefox -->
    <circle cx="150.800" cy="776.600" r="8" fill="url(#ffx)"/>
    <path d="M143.300 774q.4-4 3.200-6q-.2 2.300 1.200 3.200q2.500-1.200 3.400-4.600q4.500 2 6 6q1.800 5.500-1.400 9.300q3-7-2.700-10.300q-3.800-.3-5.800 2z" fill="#ffb52a"/>
    <!-- explorer -->
    <path d="M178.700 770.200h6.300l1.400 1.600h8.400v10.700h-16.100z" fill="#f4cf58"/>
    <rect x="178.700" y="773.200" width="16.100" height="3.300" fill="#fae28c"/>
    <path d="M181.200 777.200h11.200v5.300h-11.200z" fill="#3a9ae0"/>
    <rect x="184.200" y="779.800" width="5.200" height="2.700" fill="#f4cf58"/>
    <!-- chrome -->
    <circle cx="222.700" cy="775.800" r="8.100" fill="#e9423a"/>
    <path d="M222.700 775.800L215.700 771.800A8.100 8.100 0 0 0 218.700 782.800Z" fill="#2da94f"/>
    <path d="M222.700 775.800L215.500 771.500A8.100 8.100 0 0 0 226.200 783.100Z" fill="#2da94f"/>
    <path d="M222.700 775.800L226.500 783A8.100 8.100 0 0 0 230.700 774.500Z" fill="#fbc116"/>
    <path d="M222.700 775.800L226.200 783.100A8.100 8.100 0 0 0 230.600 773.800L222.700 773.800Z" fill="#fbc116"/>
    <circle cx="222.700" cy="775.800" r="3.900" fill="#f4f4f4"/>
    <circle cx="222.700" cy="775.800" r="3" fill="#4a8af4"/>
    <!-- zoom -->
    <rect x="240.900" y="762" width="35" height="28.500" fill="#37494d"/>
    <rect x="250.200" y="767.700" width="17" height="16.400" rx="4.200" fill="#3f8cff"/>
    <rect x="253.400" y="773" width="7.200" height="5.800" rx="1.300" fill="#fff"/>
    <path d="M261.300 775.200l3.100-2v5.400l-3.100-2z" fill="#fff"/>
    <!-- underlines -->
    <rect x="100" y="789.700" width="30" height="1" fill="#c8a2b0"/>
    <rect x="208.200" y="789.700" width="28.600" height="1" fill="#c8a2b0"/>
    <rect x="240.900" y="789.600" width="35" height="1.100" fill="#d3aebc"/>
    <!-- tray -->
    <g fill="none" stroke="#ececec" stroke-width="1.200">
      <circle cx="1210" cy="775.700" r="2"/>
      <path d="M1206.300 781.800q.4-3.600 3.700-3.600q2.400 0 3.200 1.800"/>
      <path d="M1213.200 774.500q-.6-3.600 2.200-3.800q2.800 .2 2 3.800"/>
      <path d="M1234 778.200l4.200-4.600l4.200 4.600"/>
    </g>
    <rect x="1253.500" y="772.800" width="8.300" height="5.200" fill="#f2f2f2"/>
    <circle cx="1252" cy="774.400" r="1.800" fill="#f2f2f2"/>
    <path d="M1252 774v5.600h4" stroke="#f2f2f2" stroke-width="1.100" fill="none"/>
    <path d="M1270.500 780.500l8.300-8.300v8.300z" fill="#d8d8d8" opacity=".75"/>
    <path d="M1271 779q2.500-4.500 7.500-6M1273 780.300q1.800-3 5.500-4.300M1275.200 780.600q1-1.500 3.300-2.300" stroke="#f2f2f2" stroke-width=".9" fill="none"/>
    <text x="1287.500" y="779.600" font-size="9.400" fill="#f4f4f4" textLength="15" lengthAdjust="spacingAndGlyphs">HRV</text>
    <text x="1324" y="772.200" font-size="8.600" fill="#f4f4f4" textLength="18.200" lengthAdjust="spacingAndGlyphs">11:11</text>
    <text x="1313.200" y="785.500" font-size="8.600" fill="#f4f4f4" textLength="39.600" lengthAdjust="spacingAndGlyphs">23.12.2020</text>
    <path d="M1366.500 770.700h11v8.300h-3.400l-2.600 2.300v-2.300h-5z" fill="#f6f6f6"/>
    <path d="M1368.300 773h7.400M1368.300 775h7.400M1368.300 777h4.500" stroke="#1a2b2c" stroke-width=".7"/>
    <rect x="1392.300" y="762" width="1" height="28.500" fill="#6a7678"/>
  </g>
</svg>

</div>
</body>
</html>
